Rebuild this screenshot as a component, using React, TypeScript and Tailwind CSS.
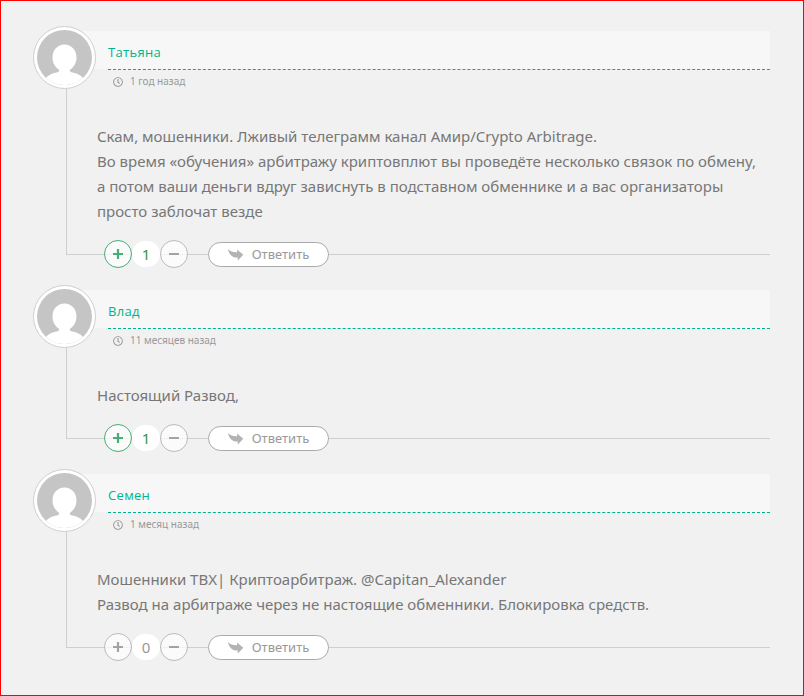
import { FaRegClock } from 'react-icons/fa';

interface Comment {
  id: string;
  author: string;
  date: string;
  text: string[];
  votes: number;
}

const comments: Comment[] = [
  {
    id: 'c1',
    author: 'Татьяна',
    date: '1 год назад',
    text: [
      'Скам, мошенники. Лживый телеграмм канал Амир/Crypto Arbitrage.',
      'Во время «обучения» арбитражу криптовплют вы проведёте несколько связок по обмену, а потом ваши деньги вдруг зависнуть в подставном обменнике и а вас организаторы просто заблочат везде',
    ],
    votes: 1,
  },
  {
    id: 'c2',
    author: 'Влад',
    date: '11 месяцев назад',
    text: ['Настоящий Развод,'],
    votes: 1,
  },
  {
    id: 'c3',
    author: 'Семен',
    date: '1 месяц назад',
    text: [
      'Мошенники ТВХ| Криптоарбитраж. @Capitan_Alexander',
      'Развод на арбитраже через не настоящие обменники. Блокировка средств.',
    ],
    votes: 0,
  },
];

function Avatar() {
  return (
    <div className="-mt-[5px] -ml-[34px] size-[63px] shrink-0 self-start rounded-full border border-[#cfcfcf] bg-white p-[3px]">
      <svg viewBox="0 0 55 55" className="size-full" aria-hidden="true">
        <circle cx="27.5" cy="27.5" r="27.5" fill="#c5c5c5" />
        <path
          fill="#fff"
          d="M27.5 14.500c-7 0-12 5.500-12 13 0 5.500 2.500 9.500 6.500 12.200.6 1.300-.3 2.300-2.500 2.700-4.500.8-8.200 2.600-10.500 5.700A28.500 28.500 0 0 0 46 48.100c-2.300-3.100-6-4.900-10.500-5.700-2.200-.4-3.100-1.400-2.500-2.700 4-2.700 6.500-6.700 6.500-12.200 0-7.500-5-13-12-13z"
        />
      </svg>
    </div>
  );
}

function ReplyArrow() {
  return (
    <svg viewBox="0 0 16 12" className="h-3 w-4" fill="#b3b3b3" aria-hidden="true">
      <path d="M0 0c2.200 2.300 5 3.500 9.200 3.300L9 .6l6.300 5.200L9.800 11.600l-.2-3C4.500 8.900.9 5.600 0 0z" />
    </svg>
  );
}

function Sign({ plus = false }: { plus?: boolean }) {
  return (
    <svg viewBox="0 0 10 10" className="size-2.5" fill="currentColor" aria-hidden="true">
      <rect y="3.900" width="10" height="2.200" rx=".4" />
      {plus ? <rect x="3.900" width="2.200" height="10" rx=".4" /> : null}
    </svg>
  );
}

function CommentItem({ comment }: { comment: Comment }) {
  const liked = comment.votes > 0;

  return (
    <article className="ml-[33px] border-b border-l border-[#cfcfcf]">
      <header className="flex h-[38px] bg-[#f7f7f7]">
        <Avatar />
        <div className="ml-3 flex h-[39px] flex-1 items-center border-b border-dashed border-[#00b38f] pt-1.5">
          <h3 className="font-['Open_Sans',sans-serif] text-[13px] tracking-wide text-[#00b38f]">
            {comment.author}
          </h3>
        </div>
      </header>
      <div className="flex h-6 items-center gap-[7px] pl-[46px] pt-px text-[10px] text-[#999]">
        <FaRegClock size={10} />
        <time>{comment.date}</time>
      </div>
      <div className="pt-[31px] pr-2 pl-[30px] text-[15px] leading-[25px] text-[#777]">
        {comment.text.map((line) => (
          <p key={line}>{line}</p>
        ))}
      </div>
      <div className="-mb-3.5 flex items-center pt-4 pl-[37px]">
        <button
          aria-label="Нравится"
          className={`flex size-7 items-center justify-center rounded-full border bg-white/70 ${
            liked ? 'border-[#45ae75] text-[#45ae75]' : 'border-[#bbb] text-[#a3a3a3]'
          }`}
        >
          <Sign plus />
        </button>
        <span
          className={`flex h-[26px] w-7 items-center justify-center rounded-full bg-white pt-px text-[15px] ${
            liked ? 'text-[#3f9440]' : 'text-[#999]'
          }`}
        >
          {comment.votes}
        </span>
        <button
          aria-label="Не нравится"
          className="flex size-7 items-center justify-center rounded-full border border-[#bbb] bg-white/70 text-[#a3a3a3]"
        >
          <Sign />
        </button>
        <button className="ml-5 flex h-[25px] w-[121px] items-center justify-center gap-2 rounded-full border border-[#aaa] bg-white pt-px text-[13px] text-[#999]">
          <ReplyArrow />
          Ответить
        </button>
      </div>
    </article>
  );
}

export default function App() {
  return (
    <main className="flex min-h-screen flex-col gap-[35px] border border-[#f00] bg-[#f1f1f1] pt-[30px] pr-[33px] pb-[46px] pl-8 font-['Noto_Sans','Open_Sans',sans-serif]">
      {comments.map((comment) => (
        <CommentItem key={comment.id} comment={comment} />
      ))}
    </main>
  );
}
